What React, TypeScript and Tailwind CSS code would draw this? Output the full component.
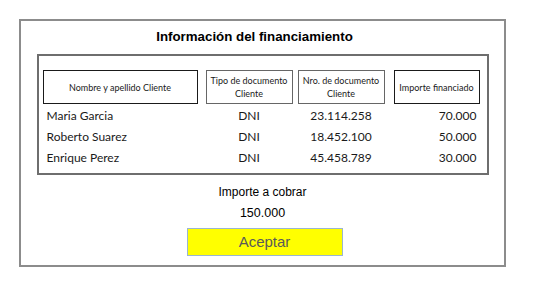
import React from 'react';

const rows = [
  { name: 'Maria Garcia', doc: 'DNI', nro: '23.114.258', importe: '70.000' },
  { name: 'Roberto Suarez', doc: 'DNI', nro: '18.452.100', importe: '50.000' },
  { name: 'Enrique Perez', doc: 'DNI', nro: '45.458.789', importe: '30.000' },
];

const cellText = "font-['Lato','Open_Sans',sans-serif] text-[9px] leading-[13px] text-[#1a1a1a] text-center";
const rowText = "font-['Lato','Open_Sans',sans-serif] text-[12px] text-[#1a1a1a]";

function App() {
  return (
    <div className="w-[536px] h-[282px] bg-white pt-[19px] pl-[19px]">
      <div className="w-[487px] h-[248px] border-2 border-[#8c8c8c] flex flex-col items-center">
        {/* Title */}
        <h1 className="pt-[8px] mr-[16px] font-['Liberation_Sans',Arial,sans-serif] font-bold text-[13.3px] leading-[16px] text-black">
          Información del financiamiento
        </h1>

        {/* Table box */}
        <div className="mt-[9px] w-[452px] border-2 border-[#6e6e6e] pt-[14px] pl-[4px] pb-[5px]">
          <div className="flex h-[34px]">
            <div className={`w-[155px] border border-[#1a1a1a] flex items-center justify-center ${cellText}`}>
              Nombre y apellido Cliente
            </div>
            <div className={`ml-[8px] w-[87px] border border-[#666] flex items-center justify-center ${cellText}`}>
              Tipo de documento<br />Cliente
            </div>
            <div className={`ml-[5px] w-[87px] border border-[#666] flex items-center justify-center ${cellText}`}>
              Nro. de documento<br />Cliente
            </div>
            <div className={`ml-[9px] w-[86px] border border-[#1a1a1a] flex items-center justify-center ${cellText}`}>
              Importe financiado
            </div>
          </div>
          <div className="pt-[1px]">
            {rows.map((r) => (
              <div key={r.name} className={`flex h-[21px] items-center ${rowText}`}>
                <div className="w-[155px] pl-[4px]">{r.name}</div>
                <div className="ml-[8px] w-[87px] text-center">{r.doc}</div>
                <div className="ml-[5px] w-[87px] text-center">{r.nro}</div>
                <div className="ml-[9px] w-[86px] text-right pr-[3px]">{r.importe}</div>
              </div>
            ))}
          </div>
        </div>

        {/* Total */}
        <p className="mt-[10px] font-['Liberation_Sans',Arial,sans-serif] text-[12px] leading-[14px] text-black">
          Importe a cobrar
        </p>
        <p className="mt-[7px] font-['Liberation_Sans',Arial,sans-serif] text-[12.5px] leading-[14px] text-black">
          150.000
        </p>
        <button className="mt-[8px] ml-[4px] w-[156px] h-[28px] bg-[#ffff00] border border-[#9ab6d0] font-['Liberation_Sans',Arial,sans-serif] text-[15px] text-[#5a5a5a]">
          Aceptar
        </button>
      </div>
    </div>
  );
}

export default App;
